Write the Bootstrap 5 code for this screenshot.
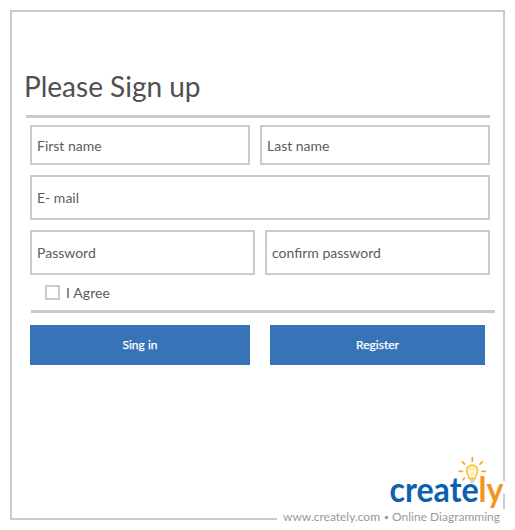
<!DOCTYPE html>
<html lang="en">
<head>
<meta charset="utf-8">
<meta name="viewport" content="width=device-width, initial-scale=1">
<title>Please Sign up</title>
<link href="https://cdn.jsdelivr.net/npm/bootstrap@5.3.0/dist/css/bootstrap.min.css" rel="stylesheet">
<style>
body { font-family: Lato, sans-serif; color: #555; width: 515px; height: 530px; overflow: hidden; background: #fff; }
.frame { margin: 10px; width: 495px; height: 510px; border: 2px solid #cbcbcb; padding: 56px 0 0 12px; }
.heading { font-size: 28px; line-height: 36px; letter-spacing: 0; color: #505050; height: 47px; }
.rule { height: 3px; background: #cbcbcb; }
.rule-top { margin-left: 2px; width: 463.5px; }
.rule-bottom { margin-left: 7px; width: 463.5px; }
.fields { margin-left: 6px; width: 460px; }
.field-rows { gap: 10px; padding-top: 7px; }
.field { border: 2px solid #cbcbcb; padding: 0 5px; font-size: 14px; line-height: 20px; color: #5c5c5c; background: #fff; }
.h-name { height: 40px; padding-top: 1px; }
.h-tall { height: 45px; }
.w-first { width: 220px; }
.w-last { width: 230px; }
.w-half { width: 225px; }
.agree { height: 35px; padding-left: 15px; font-size: 14px; line-height: 36px; letter-spacing: .1px; color: #5c5c5c; }
.agree .form-check-input { width: 15px; height: 15px; border: 2px solid #cbcbcb; border-radius: 0; margin: 10px 6px 0 0; }
.actions { gap: 20px; margin-top: 12px; }
.action { height: 40px; border: 0; border-radius: 0; padding: 0; background: #3673b7; color: #fff; font-size: 12px; line-height: 40px; -webkit-text-stroke: .25px #fff; }
.w-register { width: 215px; }
.brand { position: absolute; left: 277px; top: 452px; }
</style>
</head>
<body>
<main class="frame">
  <h1 class="heading fw-normal m-0">Please Sign up</h1>
  <div class="rule rule-top"></div>
  <form class="m-0">
    <div class="fields field-rows d-flex flex-column">
      <div class="d-flex justify-content-between">
        <label class="field h-name w-first d-flex align-items-center">First name</label>
        <label class="field h-name w-last d-flex align-items-center">Last name</label>
      </div>
      <label class="field h-tall d-flex align-items-center">E- mail</label>
      <div class="d-flex justify-content-between">
        <label class="field h-tall w-half d-flex align-items-center">Password</label>
        <label class="field h-tall w-half d-flex align-items-center">confirm password</label>
      </div>
    </div>
    <div class="fields">
      <label class="agree d-flex"><input class="form-check-input" type="checkbox">I Agree</label>
    </div>
    <div class="rule rule-bottom"></div>
    <div class="fields actions d-flex">
      <button type="button" class="btn action w-first">Sing in</button>
      <button type="button" class="btn action w-register">Register</button>
    </div>
  </form>
</main>
<svg class="brand" width="238" height="78" viewBox="277 452 238 78" font-family="Lato, sans-serif">
  <path fill="#fff" d="M277 509H515V530H277zM386 481H515V494H386zM386 494H503V510H386z"/>
  <g stroke="#f9a72b" stroke-width="1.7" stroke-linecap="round">
    <path d="M472.300 457.700v3.500M462.300 461.800l2.300 2.300M482.300 461.800l-2.300 2.300M459 471.300h3.400M482 471.300h3.400M463 479.500l1.600-1.400"/>
  </g>
  <path fill="#fff0a8" stroke="#fbbd45" stroke-width="1.5" d="M469 478.500c0-3-2.400-4.200-2.400-8a5.500 5.500 0 0 1 11 0c0 3.800-2.400 5-2.400 8z"/>
  <path fill="none" stroke="#fff" stroke-width="1" d="M470.500 477l-1.500-6.500 2.200 1.500 1.200-1.500 1.200 1.500 1.800-1.500-1.500 6.500"/>
  <path fill="none" stroke="#b9b1a0" stroke-width="1.200" d="M469.500 480h5.600M470 482h4.500"/>
  <text x="389.500" y="502" font-size="35" font-weight="700" fill="#0b61b0" textLength="114" lengthAdjust="spacingAndGlyphs">create<tspan fill="#f7941e">ly</tspan></text>
  <text x="283" y="521" font-size="12" fill="#999" textLength="97">www.creately.com</text>
  <circle cx="386.500" cy="517.500" r="1.700" fill="#999"/>
  <text x="392" y="521" font-size="12" fill="#999" textLength="108">Online Diagramming</text>
</svg>
<script src="https://cdn.jsdelivr.net/npm/bootstrap@5.3.0/dist/js/bootstrap.bundle.min.js"></script>
</body>
</html>
